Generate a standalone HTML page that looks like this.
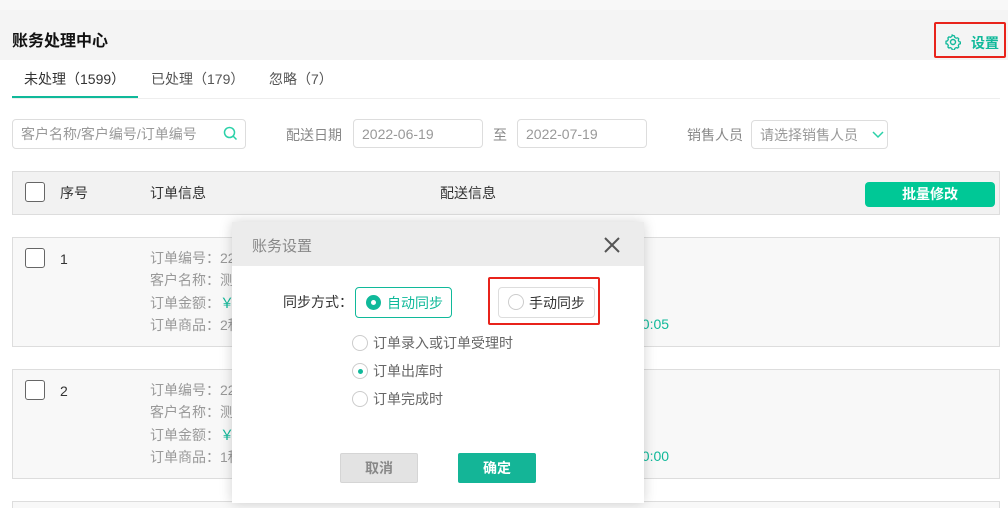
<!DOCTYPE html>
<html style="width:1008px;height:508px;overflow:hidden"><head><meta charset="utf-8"><style>
*{box-sizing:border-box;margin:0;padding:0}
body{width:1008px;height:508px;overflow:hidden;background:#fff;font-family:"Liberation Sans","Noto Sans CJK SC",sans-serif;font-size:14px;color:#333;position:relative}
.a{position:absolute}
.box{position:absolute;border:1px solid #ddd;border-radius:4px;background:#fff;color:#999;font-size:14px;line-height:28px;padding-left:8px}
.row{position:absolute;left:12px;width:988px;height:110px;background:#f8f8f8;border:1px solid #ddd}
.cb{position:absolute;width:20px;height:20px;border:1.5px solid #666;border-radius:3px;background:#fff}
.lbl{position:absolute;left:150px;color:#999;font-size:14px;line-height:23px;white-space:nowrap}
.rad{position:absolute;width:16px;height:16px;border:1px solid #ccc;border-radius:50%;background:#fff}
</style></head><body>
<div class="a" style="left:0;top:0;width:1008px;height:10px;background:#f8f8f8"></div>
<div class="a" style="left:0;top:10px;width:1008px;height:50px;background:#f4f4f4"></div>
<div class="a" style="left:12px;top:27px;font-size:16px;font-weight:bold;color:#111">账务处理中心</div>
<div class="a" style="left:934px;top:22px;width:72px;height:36px;border:2px solid #e8231b;border-radius:2px"></div>
<svg class="a" style="left:945px;top:34px" width="16" height="16" viewBox="0 0 16 16"><circle cx="8" cy="8" r="2.5" fill="none" stroke="#10b99a" stroke-width="1.4"/><path d="M8 1.5l1.4.4.4 1.5 1.4.8 1.5-.4 1 1-.4 1.5.8 1.4 1.5.4v1.6l-1.5.4-.8 1.4.4 1.5-1 1-1.5-.4-1.4.8-.4 1.5H7.2l-.4-1.5-1.4-.8-1.5.4-1-1 .4-1.5-.8-1.4-1.5-.4V7.2l1.5-.4.8-1.4-.4-1.5 1-1 1.5.4 1.4-.8.4-1.5z" fill="none" stroke="#10b99a" stroke-width="1.3"/></svg>
<div class="a" style="left:971px;top:33px;color:#10b99a;font-weight:bold;font-size:14px">设置</div>

<div class="a" style="left:24px;top:69px;color:#333">未处理（1599）</div>
<div class="a" style="left:151px;top:69px;color:#555">已处理（179）</div>
<div class="a" style="left:269px;top:69px;color:#555">忽略（7）</div>
<div class="a" style="left:12px;top:98px;width:988px;height:1px;background:#eee"></div>
<div class="a" style="left:12px;top:96px;width:126px;height:2px;background:#10b99a"></div>

<div class="box" style="left:12px;top:119px;width:234px;height:30px">客户名称/客户编号/订单编号</div>
<svg class="a" style="left:223px;top:126px" width="15" height="15" viewBox="0 0 15 15"><circle cx="6.5" cy="6.5" r="5" fill="none" stroke="#2ad1a8" stroke-width="1.5"/><path d="M10 10l3.5 3.5" stroke="#2ad1a8" stroke-width="1.5"/></svg>
<div class="a" style="left:286px;top:125px;color:#888">配送日期</div>
<div class="box" style="left:353px;top:119px;width:130px;height:29px">2022-06-19</div>
<div class="a" style="left:493px;top:125px;color:#888">至</div>
<div class="box" style="left:517px;top:119px;width:130px;height:29px">2022-07-19</div>
<div class="a" style="left:687px;top:125px;color:#888">销售人员</div>
<div class="box" style="left:751px;top:120px;width:137px;height:29px">请选择销售人员</div>
<svg class="a" style="left:872px;top:131px" width="12" height="8" viewBox="0 0 12 8"><path d="M1 1l5 5 5-5" fill="none" stroke="#2ad1a8" stroke-width="1.5"/></svg>

<div class="a" style="left:12px;top:171px;width:988px;height:44px;background:#f2f2f2;border:1px solid #ddd"></div>
<div class="cb" style="left:25px;top:182px"></div>
<div class="a" style="left:60px;top:183px;color:#333">序号</div>
<div class="a" style="left:150px;top:183px;color:#333">订单信息</div>
<div class="a" style="left:440px;top:183px;color:#333">配送信息</div>
<div class="a" style="left:865px;top:182px;width:130px;height:25px;background:#00c896;border-radius:4px;color:#fff;text-align:center;line-height:25px;font-weight:bold">批量修改</div>

<div class="row" style="top:237px"></div>
<div class="cb" style="left:25px;top:248px"></div>
<div class="a" style="left:60px;top:251px;color:#333">1</div>
<div class="lbl" style="top:247px">订单编号：22</div>
<div class="lbl" style="top:269px">客户名称：测</div>
<div class="lbl" style="top:292px">订单金额：<span style="color:#10b99a">￥</span></div>
<div class="lbl" style="top:314px">订单商品：2种</div>
<div class="a" style="left:634px;top:316px;color:#10b99a">00:05</div>

<div class="row" style="top:369px"></div>
<div class="cb" style="left:25px;top:380px"></div>
<div class="a" style="left:60px;top:383px;color:#333">2</div>
<div class="lbl" style="top:379px">订单编号：22</div>
<div class="lbl" style="top:401px">客户名称：测</div>
<div class="lbl" style="top:424px">订单金额：<span style="color:#10b99a">￥</span></div>
<div class="lbl" style="top:446px">订单商品：1种</div>
<div class="a" style="left:634px;top:448px;color:#10b99a">20:00</div>

<div class="row" style="top:501px;height:7px;border-bottom:none"></div>

<div class="a" style="left:232px;top:222px;width:412px;height:281px;background:#fff;box-shadow:0 0 12px rgba(0,0,0,.18)">
 <div class="a" style="left:0;top:0;width:412px;height:44px;background:#ececec"></div>
 <div class="a" style="left:20px;top:13px;font-size:15px;color:#888">账务设置</div>
 <svg class="a" style="left:371px;top:14px" width="18" height="18" viewBox="0 0 18 18"><path d="M2 2l14 14M16 2L2 16" stroke="#555" stroke-width="2"/></svg>
 <div class="a" style="left:51px;top:70px;color:#333">同步方式：</div>
 <div class="a" style="left:123px;top:65px;width:97px;height:31px;border:1px solid #10b99a;border-radius:4px"></div>
 <div class="a" style="left:134px;top:73px;width:15px;height:15px;border-radius:50%;background:#10b99a"></div>
 <div class="a" style="left:139px;top:78px;width:5px;height:5px;border-radius:50%;background:#fff"></div>
 <div class="a" style="left:155px;top:71px;color:#10b99a">自动同步</div>
 <div class="a" style="left:256px;top:55px;width:112px;height:48px;border:2px solid #e8231b;border-radius:2px"></div>
 <div class="a" style="left:266px;top:65px;width:97px;height:31px;border:1px solid #ddd;border-radius:4px"></div>
 <div class="rad" style="left:276px;top:72px"></div>
 <div class="a" style="left:297px;top:71px;color:#333">手动同步</div>
 <div class="rad" style="left:120px;top:113px"></div>
 <div class="a" style="left:141px;top:111px;color:#666">订单录入或订单受理时</div>
 <div class="rad" style="left:120px;top:141px"></div>
 <div class="a" style="left:126px;top:147px;width:5px;height:5px;border-radius:50%;background:#10b99a"></div>
 <div class="a" style="left:141px;top:139px;color:#666">订单出库时</div>
 <div class="rad" style="left:120px;top:169px"></div>
 <div class="a" style="left:141px;top:167px;color:#666">订单完成时</div>
 <div class="a" style="left:108px;top:231px;width:78px;height:30px;background:#e3e3e3;border:1px solid #d5d5d5;border-radius:2px;color:#888;text-align:center;line-height:28px;font-weight:bold">取消</div>
 <div class="a" style="left:226px;top:231px;width:78px;height:30px;background:#14b597;border-radius:2px;color:#fff;text-align:center;line-height:30px;font-weight:bold">确定</div>
</div>
</body></html>
